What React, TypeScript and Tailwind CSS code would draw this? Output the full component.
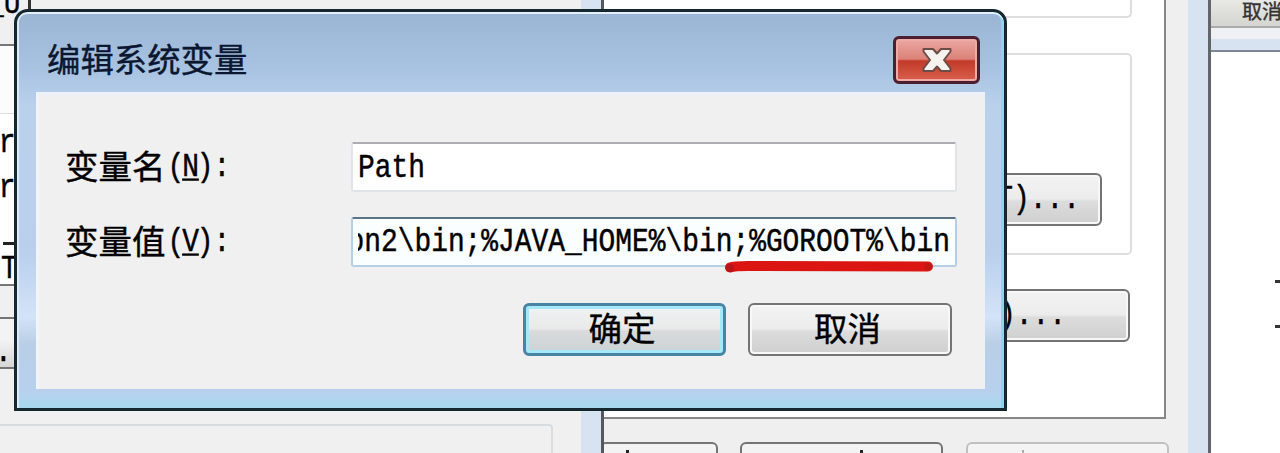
import type { ReactNode } from "react";

const mono = "font-['Liberation_Mono','Noto_Sans_CJK_SC',monospace]";
const cjk = "font-['Noto_Sans_CJK_SC',sans-serif] [-webkit-text-stroke:0.4px_currentColor]";

function Mono({ children, className = "" }: { children: ReactNode; className?: string }) {
  return (
    <span className={`inline-block origin-center scale-y-[1.16] whitespace-pre text-[27.9px] leading-[40px] [-webkit-text-stroke:0.4px_currentColor] ${mono} ${className}`}>
      {children}
    </span>
  );
}

const grayButton =
  "border-2 border-[#747474] rounded-[6px] bg-[linear-gradient(#f3f3f3,#ececec_48%,#dcdcdc_54%,#cfcfcf)] shadow-[inset_0_0_0_2px_#f8f8f8]";

function LeftWindow() {
  return (
    <div className="absolute left-0 top-0 flex h-[453px] w-[604px] border-r-[3px] border-[#55585d] bg-[#f0f0f0]">
      <div className="relative flex grow flex-col">
        <div className="h-[12px] w-[31px] shrink-0 border-r-[3px] border-[#333]" />
        <div className="mt-[32px] h-[242px] shrink-0 border-y-2 border-[#777] bg-white">
          <div className="h-[68px] border-b border-[#ddd] bg-[#fcfcfc]" />
        </div>
        <div className="mt-[31px] h-[52px] w-[40px] shrink-0 border-y-2 border-[#747474] bg-[linear-gradient(#f3f3f3_45%,#d6d6d6)]" />
        <div className="mt-[55px] h-[29px] w-[553px] shrink-0 rounded-tr border-r-2 border-t-2 border-[#d8dcdf]" />
        <Mono className="absolute -left-[13px] -top-[15px]">_U</Mono>
        <Mono className="absolute -left-[18px] top-[124px]">or</Mono>
        <Mono className="absolute -left-[18px] top-[169px]">or</Mono>
        <Mono className="absolute -left-[15px] top-[221px]">-</Mono>
        <div className="absolute left-[3px] top-[242px] h-[3px] w-[12px] bg-[#222]" />
        <Mono className="absolute left-[1px] top-[250px]">T</Mono>
        <Mono className="absolute -left-[5px] top-[333px]">.</Mono>
      </div>
      <div className="w-[20px] bg-[#d7e3f1]" />
    </div>
  );
}

function RightWindow() {
  return (
    <div className="absolute left-[604px] top-0 flex h-[453px] w-[607px] border-r-[3px] border-[#62656a] bg-[#f0eff0]">
      <div className="flex h-[453px] w-[584px] flex-col">
        <div className="relative h-[419px] w-[562px] border-b-2 border-r-2 border-[#868686] bg-white">
          <div className="h-[18px] w-[528px] rounded-br-[5px] border-b-2 border-r-2 border-[#dedede]" />
          <div className="mt-[35px] flex h-[202px] w-[528px] flex-col items-end rounded-[5px] border-2 border-[#dedede] pr-[28px] pt-[118px]">
            <div className={`flex h-[53px] w-[200px] items-center justify-end pr-[20px] ${grayButton}`}>
              <Mono>T)...</Mono>
            </div>
          </div>
          <div className={`ml-[300px] mt-[34px] flex h-[53px] w-[226px] items-center justify-end pr-[62px] ${grayButton}`}>
            <Mono>)...</Mono>
          </div>
        </div>
        <div className="mt-[23px] flex h-[11px] overflow-hidden">
          <div className="-ml-[4px] flex h-[52px] w-[118px] rounded-[6px] border-2 border-[#747474] bg-[#f3f3f3] pl-[24px] pt-[6px]">
            <span className="block h-[8px] w-[3px] bg-[#222]" />
          </div>
          <div className="ml-[22px] flex h-[52px] w-[203px] rounded-[6px] border-2 border-[#747474] bg-[#f3f3f3] pl-[118px] pt-[6px]">
            <span className="block h-[8px] w-[3px] bg-[#222]" />
          </div>
          <div className="ml-[23px] flex h-[52px] w-[203px] rounded-[6px] border-2 border-[#c0c0c0] bg-[#f4f4f4] pl-[54px] pt-[6px]">
            <span className="block h-[8px] w-[2px] bg-[#aaa]" />
          </div>
        </div>
      </div>
      <div className="w-[20px] bg-[#d7e3f1]" />
    </div>
  );
}

function FarWindow() {
  return (
    <div className="absolute left-[1211px] top-0 flex h-[453px] w-[69px] flex-col overflow-hidden bg-white">
      <div className={`flex h-[28px] items-center whitespace-nowrap border-b-2 border-[#aaa] bg-[linear-gradient(#e8e8e4,#d4d4d0)] pb-[4px] pl-[31px] text-[20px] leading-[20px] text-[#333] ${cjk}`}>
        取消
      </div>
      <div className="h-[11px] bg-[#eff0f3]" />
      <div className="h-[13px] border-b-2 border-[#7d8894] bg-[#d7e3f1]" />
      <div className="mt-[228px] h-[3px] w-[5px] self-end bg-[#333]" />
      <div className="mt-[42px] h-[3px] w-[5px] self-end bg-[#333]" />
    </div>
  );
}

function CloseButton() {
  return (
    <button className="flex h-[48px] w-[87px] items-center justify-center rounded-[6px] border-[3px] border-[#4a2030] bg-[linear-gradient(#eaa9a3,#dc8178_48%,#c23a28_52%,#d8604c)] shadow-[inset_0_0_0_2px_#f0aaa5]">
      <svg width="32" height="28" viewBox="0 0 32 28">
        <path d="M2.500 3h9.500l4 4.500 4-4.500h9.500v2.500l-6.500 8.500 6.500 8.500v2.500h-9.500l-4-4.500-4 4.500H2.500v-2.500l6.500-8.500-6.500-8.500z" fill="#f6f3ef" stroke="#6d4c48" strokeWidth="2" strokeLinejoin="round" />
      </svg>
    </button>
  );
}

function Label({ text, hotkey }: { text: string; hotkey: string }) {
  return (
    <label className="flex w-[286px] items-center text-black">
      <span className={`pb-[4px] text-[33.5px] leading-[44px] ${cjk}`}>{text}</span>
      <span className="ml-[3px] flex w-[45px] items-center justify-between pt-[2px]">
        <Mono className="-ml-[1px] -mr-[5px]">(</Mono>
        <Mono className="-mx-[6px] underline decoration-2 underline-offset-2">{hotkey}</Mono>
        <Mono className="-ml-[5px]">)</Mono>
      </span>
      <Mono className="mt-[2px]">:</Mono>
    </label>
  );
}

function Dialog() {
  return (
    <div className="absolute left-[14px] top-[9px] flex h-[402px] w-[993px] flex-col rounded-t-[14px] border-[3px] border-[#16282f] bg-[linear-gradient(#9ab5d3,#a9c4e2_60px,#bad1ec_95px,#b9cfec_240px,#d3e3f8_305px,#b9cfe6_332px,#b7d0ee_380px,#a6d9ec)] shadow-[inset_0_2px_0_#e6f0fa,inset_2px_0_0_#deebf8,inset_-3px_0_0_#91d2ef]">
      <header className="flex h-[80px] items-start justify-between pl-[30px] pr-[24px] pt-[24px]">
        <h1 className={`-mt-[3px] text-[33.4px] leading-[50px] text-[#0b1730] ${cjk}`}>编辑系统变量</h1>
        <CloseButton />
      </header>
      <main className="relative ml-[19px] flex h-[297px] w-[949px] flex-col bg-[#f0f0f0] shadow-[inset_0_3px_0_#edf2fa,inset_3px_0_0_#f1f5fa]">
        <div className="mt-[50px] flex h-[50px] items-center pl-[29px]">
          <Label text="变量名" hotkey="N" />
          <div className="flex h-[50px] w-[606px] items-center rounded-[3px] border-2 border-[#e0e3e7] border-t-[#abadb3] bg-white pl-[5px] pt-[3px]">
            <Mono>Path</Mono>
          </div>
        </div>
        <div className="mt-[25px] flex h-[50px] items-center pl-[29px]">
          <Label text="变量值" hotkey="V" />
          <div className="flex h-[50px] w-[606px] items-center rounded-[3px] border-2 border-[#b5cfe7] border-t-[#5b7384] bg-[#fafeff] px-[5px] pt-[2px]">
            <div className="flex h-[42px] w-[592px] items-center justify-end overflow-hidden">
              <Mono className="shrink-0">on2\bin;%JAVA_HOME%\bin;%GOROOT%\bin</Mono>
            </div>
          </div>
        </div>
        <svg className="absolute left-[684px] top-[163px]" width="220" height="24" viewBox="0 0 220 24">
          <path d="M10 12.500Q14 11 28 11L208 11.500" fill="none" stroke="#db1512" strokeWidth="10" strokeLinecap="round" />
          <circle cx="10" cy="13" r="4" fill="#b61519" />
          <circle cx="208" cy="11.500" r="3.500" fill="#c41518" />
        </svg>
        <div className="mt-[36px] flex gap-[22px] pl-[487px]">
          <button className={`h-[53px] w-[203px] rounded-[6px] border-[3px] border-[#4785a3] bg-[linear-gradient(#eff3f3,#e9e9e9_48%,#d8dadb_54%,#cbd3d5)] pb-[5px] pr-[5px] text-[33.5px] leading-[42px] text-black shadow-[inset_0_0_0_3px_#a4e8fa] ${cjk}`}>
            确定
          </button>
          <button className={`h-[53px] w-[204px] pb-[5px] pr-[5px] text-[33.5px] leading-[44px] text-black ${grayButton} ${cjk}`}>取消</button>
        </div>
      </main>
    </div>
  );
}

export default function App() {
  return (
    <div className="relative h-[453px] w-[1280px] overflow-hidden bg-white">
      <LeftWindow />
      <RightWindow />
      <FarWindow />
      <Dialog />
    </div>
  );
}
